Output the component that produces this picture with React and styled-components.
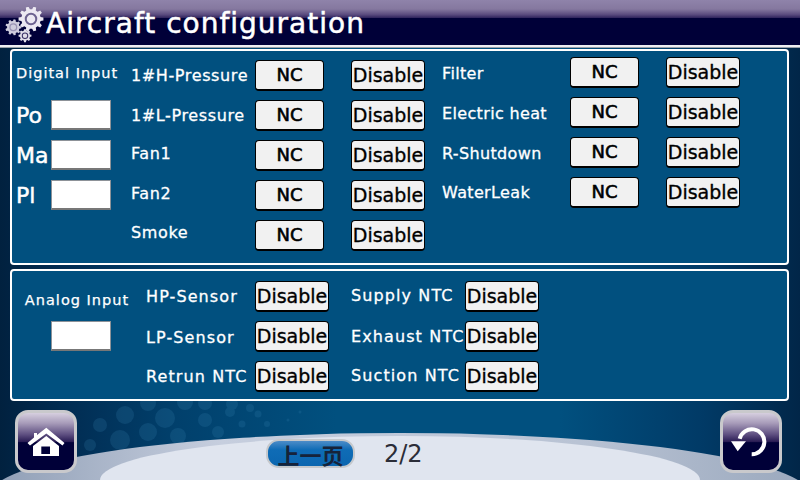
import React from "react";
import styled, { createGlobalStyle } from "styled-components";

const GlobalStyle = createGlobalStyle`
  html, body { margin: 0; padding: 0; }
  body { width: 800px; height: 480px; overflow: hidden; background: #003a66; }
`;

const FONT = `"DejaVu Sans", sans-serif`;

const Page = styled.div`
  position: relative;
  width: 800px;
  height: 480px;
  overflow: hidden;
  display: flex;
  flex-direction: column;
  font-family: ${FONT};
  background: linear-gradient(90deg, #01213f 0%, #012c52 8%, #01406c 22%, #01507f 42%, #01507f 70%, #013a66 88%, #012648 100%);
`;

const Backdrop = styled.svg`
  position: absolute;
  left: 0;
  top: 0;
  width: 800px;
  height: 480px;
`;

const Header = styled.header`
  position: relative;
  height: 45px;
  flex: none;
  display: flex;
  align-items: flex-start;
  padding-left: 5px;
  border-bottom: 2px solid #eeeef2;
  box-shadow: 0 1px 0 #9aa0a8;
  background: linear-gradient(180deg, #8f83aa 0%, #85789f 20%, #5c4d80 32%, #332760 39%, #000038 41%, #000038 100%);
`;

const GearWrap = styled.svg`
  width: 40px;
  height: 38px;
  margin-top: 7px;
  flex: none;
`;

const Title = styled.h1`
  margin: 7px 0 0 1px;
  font-size: 28px;
  line-height: 34px;
  font-weight: 400;
  letter-spacing: 1px;
  color: #fff;
  -webkit-text-stroke: 0.5px #fff;
`;

const Main = styled.main`
  position: relative;
  flex: none;
  display: flex;
  flex-direction: column;
  gap: 4px;
  padding: 2px 11px 0 10px;
`;

const Panel = styled.section`
  display: flex;
  box-sizing: border-box;
  height: ${(p) => p.$h}px;
  padding: ${(p) => p.$pad};
  background: #01507f;
  border: 2px solid #fff;
  border-radius: 4px;
`;

const SideColumn = styled.div`
  flex: none;
  width: ${(p) => p.$w}px;
  display: flex;
  flex-direction: column;
  align-items: ${(p) => (p.$center ? "center" : "flex-start")};
`;

const SideHead = styled.div`
  box-sizing: border-box;
  height: 40px;
  padding-top: ${(p) => p.$top}px;
  margin-right: ${(p) => p.$shift || 0}px;
  font-size: 14.5px;
  line-height: 20px;
  letter-spacing: 1px;
  color: #fff;
  white-space: nowrap;
  -webkit-text-stroke: 0.25px #fff;
`;

const FieldRow = styled.div`
  display: flex;
  align-items: center;
  height: 30px;
  margin-bottom: 10px;
`;

const FieldName = styled.span`
  width: 35px;
  font-size: 22px;
  color: #fff;
  -webkit-text-stroke: 0.5px #fff;
`;

const Field = styled.div`
  width: 60px;
  height: 30px;
  box-sizing: border-box;
  background: #fff;
  border: 1px solid #8d9298;
  border-bottom: 2px solid #777;
`;

const Rows = styled.div`
  flex: none;
  width: ${(p) => p.$w}px;
  margin-top: ${(p) => p.$top || 0}px;
  display: flex;
  flex-direction: column;
  gap: 10px;
`;

const Row = styled.div`
  display: flex;
  align-items: center;
  height: 30px;
`;

const Label = styled.span`
  flex: none;
  width: ${(p) => p.$w}px;
  font-size: 16px;
  letter-spacing: ${(p) => p.$track}px;
  color: #fff;
  white-space: nowrap;
  position: relative;
  top: ${(p) => p.$down || 0}px;
  -webkit-text-stroke: 0.3px #fff;
`;

const Toggle = styled.button`
  flex: none;
  width: ${(p) => (p.$wide ? 74 : 69)}px;
  height: 31px;
  margin-right: ${(p) => p.$after || 0}px;
  padding: 1px 0 0;
  box-sizing: border-box;
  font-family: ${FONT};
  font-size: ${(p) => (p.$wide ? 19 : 18)}px;
  font-weight: 400;
  line-height: 1;
  color: #000;
  -webkit-text-stroke: ${(p) => (p.$wide ? 0.35 : 0.6)}px #000;
  background: #f1f1f1;
  border: 1px solid #000;
  border-bottom-width: 2px;
  border-radius: 4px;
`;

const Footer = styled.footer`
  position: relative;
  flex: 1;
  display: flex;
  align-items: flex-start;
  padding: 9px 18px 0 15px;
`;

const IconButton = styled.button`
  flex: none;
  width: 62px;
  height: 63px;
  padding: 0;
  box-sizing: border-box;
  border: 3px solid #c9c9cc;
  border-radius: 13px;
  display: flex;
  align-items: center;
  justify-content: center;
  background: linear-gradient(180deg, #d6cfdf 0%, #a79bb9 18%, #5d4e80 38%, #2a1d55 50%, #000038 52%, #000038 100%);
`;

const Pager = styled.div`
  flex: none;
  margin: 29px 0 0 189px;
  display: flex;
  align-items: center;
  gap: 29px;
`;

const PrevButton = styled.button`
  width: 89px;
  height: 29px;
  padding: 0;
  box-sizing: border-box;
  border: 2px solid #c5c8cc;
  border-radius: 13px;
  font-family: "Noto Sans CJK SC", ${FONT};
  font-size: 22px;
  line-height: 1;
  font-weight: 700;
  color: #16233a;
  background: linear-gradient(180deg, #4c8cc8 0%, #0f6cb6 35%, #0b66b0 100%);
`;

const PageCount = styled.span`
  font-size: 24px;
  color: #2b2d38;
`;

const Spacer = styled.div`
  flex: 1;
`;

// one gear as a path, centred on cx/cy
const gearPath = (cx, cy, r, teeth) => {
  let d = "";
  const step = (Math.PI * 2) / teeth;
  for (let i = 0; i < teeth; i++) {
    const a = i * step;
    const pts = [
      [r * 0.78, a - step * 0.32],
      [r, a - step * 0.18],
      [r, a + step * 0.18],
      [r * 0.78, a + step * 0.32],
    ];
    pts.forEach(([rad, t], j) => {
      const x = (cx + rad * Math.cos(t)).toFixed(2);
      const y = (cy + rad * Math.sin(t)).toFixed(2);
      d += `${i === 0 && j === 0 ? "M" : "L"}${x} ${y}`;
    });
  }
  return d + "Z";
};

const Gear = ({ cx, cy, r, teeth, fill, ring }) => (
  <g>
    <path d={gearPath(cx, cy, r, teeth)} fill={fill} />
    <circle cx={cx} cy={cy} r={r * 0.42} fill="none" stroke={ring} strokeWidth={r * 0.16} />
  </g>
);

const Gears = () => (
  <GearWrap viewBox="0 0 40 38">
    <Gear cx={26} cy={12} r={12.5} teeth={10} fill="#ece9f2" ring="#6d6390" />
    <Gear cx={8.3} cy={20.3} r={8} teeth={9} fill="#cfccdd" ring="#9a93b4" />
    <Gear cx={20} cy={28.7} r={6.5} teeth={8} fill="#e0dde9" ring="#3a3266" />
  </GearWrap>
);

const HomeIcon = () => (
  <svg width="38" height="30" viewBox="0 0 38 30">
    <path d="M19.300 0.800 L37.500 16 L35.500 18.500 L19.300 6.500 L3 18.500 L0.500 16 L7 10.500 V6 H10 V8 Z" fill="#fff" />
    <path fillRule="evenodd" d="M19.300 9 L32 19 V29 H6 V19 Z M14.300 19.500 V27 H23 V19.500 Z" fill="#fff" />
  </svg>
);

const BackIcon = () => (
  <svg width="38" height="36" viewBox="0 0 38 36" overflow="visible">
    <path d="M7.700 14.800 A12.500 12.500 0 1 1 19.700 30.200" fill="none" stroke="#fff" strokeWidth="4" />
    <path d="M-1 17.200 H14 L5.700 27.200 Z" fill="#fff" />
  </svg>
);

// dot pattern and the light swoosh at the bottom of the screen
const dots = [
  [125, 415, 9], [148, 403, 8], [165, 418, 10], [185, 402, 8], [120, 440, 10], [148, 432, 9], [178, 436, 8],
  [205, 420, 7], [192, 448, 6], [230, 412, 5], [218, 432, 6], [250, 408, 4], [258, 414, 3.500], [242, 424, 3.500],
  [267, 424, 3], [100, 425, 7], [90, 445, 6], [288, 420, 1.500], [300, 412, 1.500], [232, 404, 6], [205, 403, 7],
];

const Background = () => (
  <Backdrop viewBox="0 0 800 480">
    <defs>
      <linearGradient id="swoosh" x1="0" x2="1" y1="0" y2="0">
        <stop offset="0" stopColor="#8f9eb5" />
        <stop offset="0.28" stopColor="#c6cede" />
        <stop offset="0.72" stopColor="#b9c3d4" />
        <stop offset="1" stopColor="#9aa8bd" />
      </linearGradient>
    </defs>
    <g fill="#3a86b4" opacity="0.2">
      {dots.map(([x, y, r]) => (
        <circle key={`${x}-${y}`} cx={x} cy={y} r={r} />
      ))}
    </g>
    <ellipse cx="400" cy="495" rx="410" ry="62" fill="url(#swoosh)" />
    <ellipse cx="400" cy="480" rx="300" ry="44" fill="#e0e5ef" />
  </Backdrop>
);

// name and how far the caption sits below its row centre
const DIGITAL_LEFT = [["1#H-Pressure", 0], ["1#L-Pressure", 0], ["Fan1", -2], ["Fan2", -2], ["Smoke", -3]];
const DIGITAL_RIGHT = [["Filter", 1], ["Electric heat", 1], ["R-Shutdown", 1], ["WaterLeak", 0]];
const ANALOG_LEFT = [["HP-Sensor", 0], ["LP-Sensor", 1], ["Retrun NTC", 0]];
const ANALOG_RIGHT = [["Supply NTC", -1], ["Exhaust NTC", 0], ["Suction NTC", -1]];

export default function App() {
  return (
    <Page>
      <GlobalStyle />
      <Background />
      <Header>
        <Gears />
        <Title>Aircraft configuration</Title>
      </Header>
      <Main>
        <Panel $h={216} $pad="9px 0 0 4px">
          <SideColumn $w={115}>
            <SideHead $top={3}>Digital Input</SideHead>
            {["Po", "Ma", "Pl"].map((n) => (
              <FieldRow key={n}>
                <FieldName>{n}</FieldName>
                <Field />
              </FieldRow>
            ))}
          </SideColumn>
          <Rows $w={311}>
            {DIGITAL_LEFT.map(([l, down]) => (
              <Row key={l}>
                <Label $w={124} $track={0.62} $down={down}>{l}</Label>
                <Toggle $after={27}>NC</Toggle>
                <Toggle $wide>Disable</Toggle>
              </Row>
            ))}
          </Rows>
          <Rows $w={310} $top={-3}>
            {DIGITAL_RIGHT.map(([l, down]) => (
              <Row key={l}>
                <Label $w={128} $track={0.35} $down={down}>{l}</Label>
                <Toggle $after={27}>NC</Toggle>
                <Toggle $wide>Disable</Toggle>
              </Row>
            ))}
          </Rows>
        </Panel>
        <Panel $h={132} $pad="10px 0 0 4px">
          <SideColumn $w={130} $center>
            <SideHead $top={9} $shift={8}>Analog Input</SideHead>
            <Field />
          </SideColumn>
          <Rows $w={205}>
            {ANALOG_LEFT.map(([l, down]) => (
              <Row key={l}>
                <Label $w={109} $track={1.1} $down={down}>{l}</Label>
                <Toggle $wide>Disable</Toggle>
              </Row>
            ))}
          </Rows>
          <Rows $w={200}>
            {ANALOG_RIGHT.map(([l, down]) => (
              <Row key={l}>
                <Label $w={114} $track={1.1} $down={down}>{l}</Label>
                <Toggle $wide>Disable</Toggle>
              </Row>
            ))}
          </Rows>
        </Panel>
      </Main>
      <Footer>
        <IconButton aria-label="Home"><HomeIcon /></IconButton>
        <Pager>
          <PrevButton>上一页</PrevButton>
          <PageCount>2/2</PageCount>
        </Pager>
        <Spacer />
        <IconButton aria-label="Back"><BackIcon /></IconButton>
      </Footer>
    </Page>
  );
}
